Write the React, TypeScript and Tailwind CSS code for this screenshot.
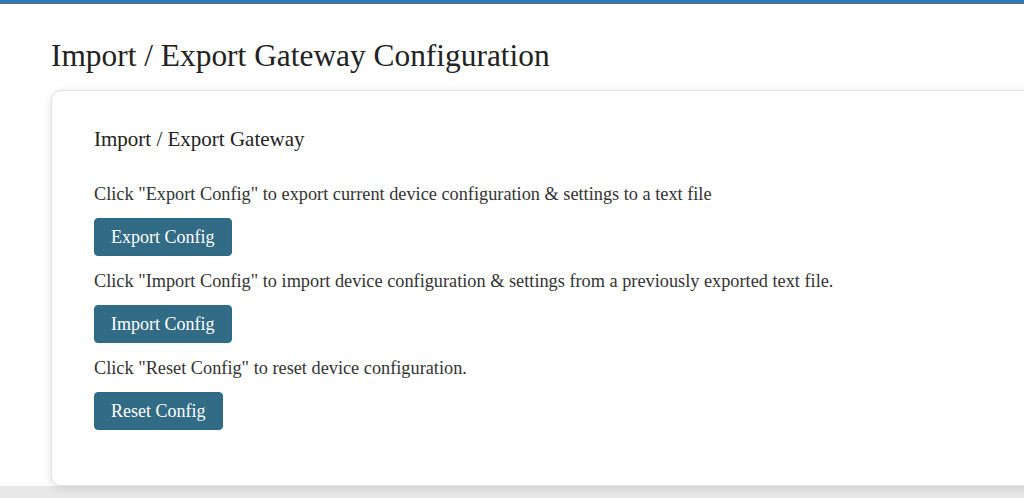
import React from "react";

const items = [
  {
    text: 'Click "Export Config" to export current device configuration & settings to a text file',
    label: "Export Config",
  },
  {
    text: 'Click "Import Config" to import device configuration & settings from a previously exported text file.',
    label: "Import Config",
  },
  {
    text: 'Click "Reset Config" to reset device configuration.',
    label: "Reset Config",
  },
];

const App = () => {
  return (
    <div className="h-[498px] overflow-hidden bg-[#e8e8e8] font-['Liberation_Serif',serif] text-[#333]">
      <div className="h-[3px] bg-[#2a7bbd]" />
      <div className="h-px bg-[#6b6b6b]" />
      <div className="h-[482px] bg-white pl-[51px]">
        <h1 className="pt-[32px] text-[31.4px] leading-[40px] text-[#222]">
          Import / Export Gateway Configuration
        </h1>
        <div className="mt-[14px] mr-[-20px] h-[396px] rounded-[10px] border border-[#e2e2e2] bg-white pl-[42px] pt-[36px] shadow-[0_2px_8px_rgba(0,0,0,0.12)]">
          <h2 className="text-[21px] leading-6 text-[#222]">Import / Export Gateway</h2>
          <div className="mt-[31px] flex flex-col">
            {items.map((it) => (
              <div key={it.label} className="flex flex-col items-start">
                <p className="text-[18.3px] leading-6">{it.text}</p>
                <button
                  type="button"
                  className="mt-[12px] mb-[13px] h-[38px] rounded-[4px] border border-[#2c6a86] bg-[#326b85] px-[16px] text-[18px] text-white"
                >
                  {it.label}
                </button>
              </div>
            ))}
          </div>
        </div>
      </div>
    </div>
  );
};

export default App;
